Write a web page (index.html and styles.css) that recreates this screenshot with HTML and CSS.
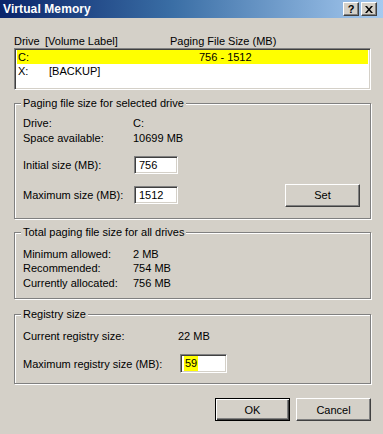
FILE: index.html
```html
<!DOCTYPE html>
<html>
<head>
<meta charset="utf-8">
<link rel="stylesheet" href="styles.css">
</head>
<body>
<div class="window">
  <div class="titlebar">
    <span class="title">Virtual Memory</span>
    <div class="caption-buttons">
      <span class="cap-btn"><span class="help-glyph">?</span></span>
      <span class="cap-btn">
        <svg width="8" height="7" viewBox="0 0 8 7"><path d="M0 0h2l2 2.5L6 0h2L5 3.5 8 7H6L4 4.5 2 7H0l3-3.5z" fill="#000"/></svg>
      </span>
    </div>
  </div>

  <div class="content">
    <div class="colhead">
      <span class="ch-drive">Drive</span><span class="ch-label">[Volume Label]</span><span class="ch-size">Paging File Size (MB)</span>
    </div>
    <div class="listbox">
      <div class="row selected"><span class="c-drive">C:</span><span class="c-label"></span><span class="c-size">756 - 1512</span></div>
      <div class="row"><span class="c-drive">X:</span><span class="c-label">[BACKUP]</span><span class="c-size"></span></div>
    </div>

    <div class="group group-selected">
      <div class="group-title">Paging file size for selected drive</div>
      <div class="info">
        <span>Drive:</span><span>C:</span>
        <span>Space available:</span><span>10699 MB</span>
      </div>
      <div class="sizes">
        <span class="lbl">Initial size (MB):</span>
        <span class="field"><span class="input">756</span></span>
        <span></span>
        <span class="lbl">Maximum size (MB):</span>
        <span class="field"><span class="input">1512</span></span>
        <span class="btn set-btn">Set</span>
      </div>
    </div>

    <div class="group group-total">
      <div class="group-title">Total paging file size for all drives</div>
      <div class="info total-info">
        <span>Minimum allowed:</span><span>2 MB</span>
        <span>Recommended:</span><span>754 MB</span>
        <span>Currently allocated:</span><span>756 MB</span>
      </div>
    </div>

    <div class="group group-registry">
      <div class="group-title">Registry size</div>
      <div class="info reg-info">
        <span>Current registry size:</span><span>22 MB</span>
      </div>
      <div class="reg-max">
        <span class="lbl">Maximum registry size (MB):</span>
        <span class="input reg-input"><span class="hl">59</span></span>
      </div>
    </div>

    <div class="actions">
      <span class="btn default-btn">OK</span>
      <span class="btn">Cancel</span>
    </div>
  </div>
</div>
</body>
</html>
```

FILE: styles.css
```css
html, body {
  margin: 0;
  padding: 0;
  background: #d4d0c8;
}
body {
  font-family: "Liberation Sans", Arial, sans-serif;
  font-size: 11px;
  color: #000;
}
.window {
  width: 383px;
  height: 434px;
  overflow: hidden;
}
.titlebar {
  height: 18px;
  background: linear-gradient(to right, #0a246a 0%, #3a6ea5 45%, #a6caf0 100%);
  display: flex;
  align-items: center;
  justify-content: space-between;
  padding: 0 6px 0 3px;
}
.title {
  color: #fff;
  font-weight: bold;
  font-size: 12px;
  letter-spacing: 0.1px;
}
.caption-buttons {
  display: flex;
  gap: 2px;
}
.cap-btn {
  width: 16px;
  height: 14px;
  box-sizing: border-box;
  background: #d4d0c8;
  border-top: 1px solid #fff;
  border-left: 1px solid #fff;
  border-right: 1px solid #404040;
  border-bottom: 1px solid #404040;
  box-shadow: inset -1px -1px 0 #808080;
  display: flex;
  align-items: center;
  justify-content: center;
}
.help-glyph {
  font-weight: bold;
  font-size: 11px;
  line-height: 11px;
}
.content {
  padding: 0 12px 0 14px;
}
.colhead {
  margin-top: 16px;
  height: 14px;
  line-height: 14px;
  display: flex;
}
.ch-drive { width: 31px; }
.ch-label { width: 125px; }
.listbox {
  margin-top: 0;
  height: 42px;
  box-sizing: border-box;
  background: #fff;
  border-top: 1px solid #808080;
  border-left: 1px solid #808080;
  border-right: 1px solid #fff;
  border-bottom: 1px solid #fff;
  box-shadow: inset 1px 1px 0 #404040, inset -1px -1px 0 #d4d0c8;
  padding: 1px 2px 0 2px;
}
.row {
  display: flex;
  height: 14px;
  line-height: 14px;
  padding-left: 1px;
}
.row.selected { background: #ffff00; }
.c-drive { width: 31px; }
.c-label { width: 150px; }
.group {
  border: 1px solid #808080;
  box-shadow: inset 1px 1px 0 #fff, 1px 1px 0 #fff;
  padding: 0 10px 0 8px;
}
.group-title {
  display: block;
  width: max-content;
  background: #d4d0c8;
  height: 13px;
  line-height: 13px;
  margin-top: -7px;
  padding: 0 2px;
  margin-left: -2px;
}
.group-selected {
  margin-top: 13px;
  height: 116px;
  box-sizing: border-box;
}
.info {
  display: grid;
  grid-template-columns: 110px auto;
  line-height: 14px;
  margin-top: 6px;
}
.info > span:nth-child(3), .info > span:nth-child(4) {
  margin-top: 1px;
}
.sizes {
  display: grid;
  grid-template-columns: 111px 1fr 75px;
  grid-template-rows: 18px 22px;
  row-gap: 10px;
  align-items: center;
  margin-top: 11px;
}
.field { display: flex; }
.input {
  display: block;
  width: 44px;
  height: 18px;
  box-sizing: border-box;
  background: #fff;
  border-top: 1px solid #808080;
  border-left: 1px solid #808080;
  border-right: 1px solid #fff;
  border-bottom: 1px solid #fff;
  box-shadow: inset 1px 1px 0 #404040, inset -1px -1px 0 #d4d0c8;
  padding: 0 4px;
  line-height: 16px;
}
.btn {
  display: flex;
  align-items: center;
  justify-content: center;
  width: 75px;
  height: 23px;
  box-sizing: border-box;
  background: #d4d0c8;
  border-top: 1px solid #fff;
  border-left: 1px solid #fff;
  border-right: 1px solid #404040;
  border-bottom: 1px solid #404040;
  box-shadow: inset -1px -1px 0 #808080;
}
.set-btn { justify-self: end; }
.group-total {
  margin-top: 13px;
  height: 67px;
  box-sizing: border-box;
}
.total-info {
  margin-top: 8px;
}
.total-info > span:nth-child(3), .total-info > span:nth-child(4) {
  margin-top: 0;
}
.total-info > span:nth-child(5), .total-info > span:nth-child(6) {
  margin-top: 1px;
}
.group-registry {
  margin-top: 15px;
  height: 70px;
  box-sizing: border-box;
}
.reg-info {
  grid-template-columns: 155px auto;
  margin-top: 8px;
}
.reg-max {
  display: flex;
  align-items: center;
  margin-top: 11px;
}
.reg-max .lbl { width: 157px; }
.reg-input {
  width: 47px;
  height: 19px;
  padding: 1px 0 0 3px;
  line-height: 15px;
}
.hl {
  background: #ffff00;
  display: inline-block;
  padding: 0 1px;
}
.actions {
  display: flex;
  justify-content: flex-end;
  gap: 6px;
  margin-top: 14px;
}
.default-btn {
  border: 1px solid #000;
  box-shadow: inset 1px 1px 0 #fff, inset -1px -1px 0 #404040, inset -2px -2px 0 #808080;
}
```
